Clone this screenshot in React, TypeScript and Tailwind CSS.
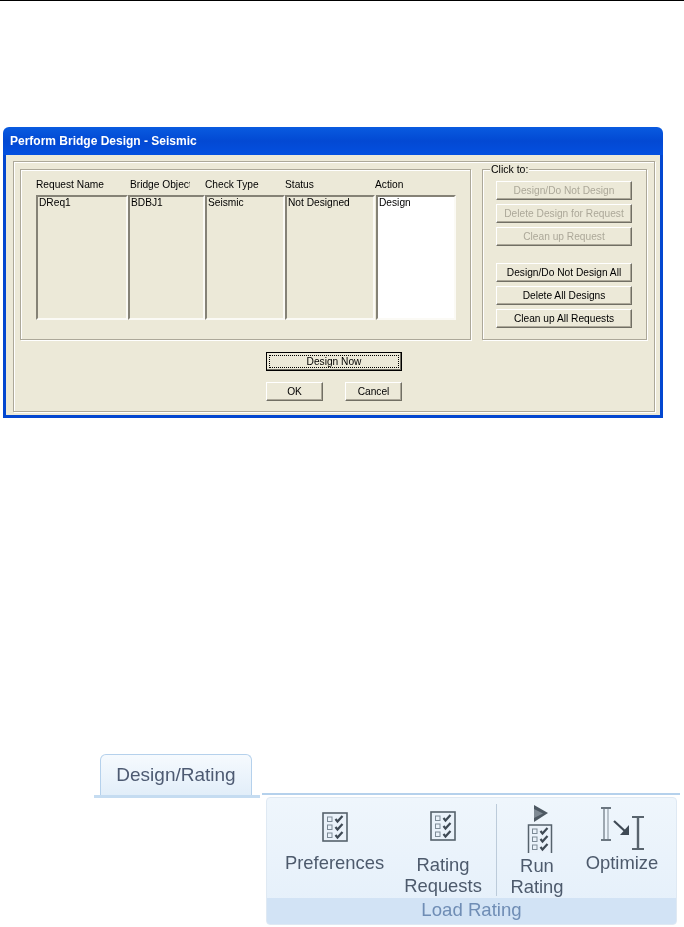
import type { ReactNode } from 'react'

// ── Dialog pieces ─────────────────────────────────────────

function ListCol({ title, value, width, titleClass, white }: { title: string; value: string; width: string; titleClass: string; white?: boolean }) {
  return (
    <div className={`flex flex-col ${width}`}>
      <div className={`h-[25px] pt-[9px] text-[10.2px] leading-[12px] whitespace-nowrap overflow-hidden ${titleClass}`}>{title}</div>
      <div
        className={`h-[125px] border-2 border-t-[#858276] border-l-[#858276] border-r-[#fbfaf5] border-b-[#fbfaf5] pl-px text-[10.2px] leading-[12px] whitespace-nowrap overflow-hidden ${white ? 'bg-white' : ''}`}
      >
        {value}
      </div>
    </div>
  )
}

function Btn({ children, disabled, className }: { children: ReactNode; disabled?: boolean; className: string }) {
  return (
    <div
      className={`h-[19px] flex items-center justify-center border border-t-white border-l-white border-r-[#716f64] border-b-[#716f64] shadow-[inset_-1px_-1px_0_#aca899] text-[10.2px] whitespace-nowrap ${disabled ? 'text-[#aca899]' : 'text-black'} ${className}`}
    >
      {children}
    </div>
  )
}

// ── Ribbon icons ──────────────────────────────────────────

function ChecklistRows() {
  return (
    <g>
      {[5, 13, 21].map((y) => (
        <g key={y}>
          <rect x="5.5" y={y} width="4.5" height="4.5" fill="none" stroke="#7c8a96" strokeWidth="1" />
          <path d={`M13.5 ${y + 2}l2 2.6 5-5.6`} fill="none" stroke="#3f4a55" strokeWidth="2.2" />
        </g>
      ))}
    </g>
  )
}

function ChecklistIcon() {
  return (
    <svg width="26" height="30" viewBox="0 0 26 30">
      <rect x="1" y="1" width="24" height="28" fill="#eaf2fa" stroke="#56626c" strokeWidth="1.6" />
      <ChecklistRows />
    </svg>
  )
}

function RunIcon() {
  return (
    <svg width="26" height="48" viewBox="0 0 26 48" className="ml-[5px]">
      <path d="M7 0l14 8-14 9z" fill="#4d5862" />
      <path d="M7 4l9 4.500-9 4.500z" fill="#7f8a94" />
      <g transform="translate(0 19)">
        <path d="M1.500 29V1h23v28" fill="#eaf2fa" stroke="#56626c" strokeWidth="1.5" />
        <ChecklistRows />
      </g>
    </svg>
  )
}

function OptimizeIcon() {
  return (
    <svg width="46" height="43" viewBox="0 0 46 43">
      <path d="M2 1h10M2 33h10" stroke="#6b7680" strokeWidth="2" />
      <path d="M5 2v30" stroke="#7b8690" strokeWidth="1.4" />
      <path d="M9 2v30" stroke="#a3adb6" strokeWidth="1.4" />
      <path d="M15 14l13 12" stroke="#3f4a55" strokeWidth="2.2" />
      <path d="M30 18v10h-9z" fill="#3f4a55" />
      <path d="M33 10h12M33 42h12" stroke="#59646e" strokeWidth="2" />
      <path d="M39 10v32" stroke="#59646e" strokeWidth="2.4" />
    </svg>
  )
}

function RibbonLabel({ children }: { children: ReactNode }) {
  return <div className="text-[18.4px] leading-[21px] text-[#4d5a6c] text-center">{children}</div>
}

// ── Page ──────────────────────────────────────────────────

export default function App() {
  return (
    <div className="relative w-[684px] h-[927px] bg-white overflow-hidden font-['Liberation_Sans',Arial,sans-serif]">
      <div className="h-px bg-black" />

      {/* Perform Bridge Design dialog */}
      <div className="mt-[126px] ml-[3px] w-[660px] h-[291px] flex flex-col text-black blur-[0.3px]">
        <div className="h-[28px] rounded-t-[6px] pl-[7px] pt-[7px] bg-gradient-to-b from-[#0a5be0] via-[#0349d3] to-[#0350e0] text-white text-[12px] leading-[14px] font-bold">
          Perform Bridge Design - Seismic
        </div>
        <div className="flex-1 bg-[#ece9d8] border-x-[3px] border-b-[3px] border-[#0347d0] pl-[7px] pt-[6px]">
          <div className="w-[642px] h-[251px] border border-[#aca899] shadow-[inset_1px_1px_0_#fff,1px_1px_0_#fff] pl-[6px] pt-[7px]">
            <div className="flex gap-[11px]">
              <div className="w-[451px] h-[171px] border border-[#aca899] shadow-[inset_1px_1px_0_#fff,1px_1px_0_#fff] pl-[15px]">
                <div className="flex">
                  <ListCol title="Request Name" value="DReq1" width="w-[92px]" titleClass="" />
                  <ListCol title="Bridge Object" value="BDBJ1" width="w-[77px]" titleClass="pl-[2px] w-[62px]" />
                  <ListCol title="Check Type" value="Seismic" width="w-[80px]" titleClass="" />
                  <ListCol title="Status" value="Not Designed" width="w-[90px]" titleClass="" />
                  <div className="ml-px">
                    <ListCol title="Action" value="Design" width="w-[80px]" titleClass="-ml-px" white />
                  </div>
                </div>
              </div>
              <div className="relative w-[165px] h-[171px] border border-[#aca899] shadow-[inset_1px_1px_0_#fff,1px_1px_0_#fff] pl-[13px] pt-[11px]">
                <span className="absolute -top-[7px] left-[7px] bg-[#ece9d8] px-px text-[10.5px] leading-[12px]">Click to:</span>
                <div className="flex flex-col gap-[4px] w-[136px]">
                  <Btn disabled className="w-full">Design/Do Not Design</Btn>
                  <Btn disabled className="w-full">Delete Design for Request</Btn>
                  <Btn disabled className="w-full">Clean up Request</Btn>
                  <Btn className="w-full mt-[13px]">Design/Do Not Design All</Btn>
                  <Btn className="w-full">Delete All Designs</Btn>
                  <Btn className="w-full">Clean up All Requests</Btn>
                </div>
              </div>
            </div>
            <div className="ml-[246px] mt-[12px] w-[136px] flex flex-col">
              <div className="h-[19px] border border-black p-[2px] shadow-[inset_-1px_-1px_0_#716f64]">
                <div className="h-full flex items-center justify-center border border-dotted border-black text-[10.2px]">Design Now</div>
              </div>
              <div className="mt-[11px] flex justify-between">
                <Btn className="w-[57px]">OK</Btn>
                <Btn className="w-[57px]">Cancel</Btn>
              </div>
            </div>
          </div>
        </div>
      </div>

      {/* Design/Rating ribbon */}
      <div className="mt-[336px] ml-[94px] flex blur-[0.5px]">
        <div className="w-[166px] h-[44px] flex flex-col">
          <div className="h-[41px] ml-[6px] mr-[8px] rounded-t-[6px] border-x border-t border-[#b5d1ec] bg-gradient-to-b from-[#f6fafe] to-[#e2eef9] pt-[9px] text-center text-[19px] leading-[22px] text-[#4d5a72]">
            Design/Rating
          </div>
          <div className="h-[3px] bg-[#c5dcf1]" />
        </div>
        <div className="ml-[2px] mt-[39px] w-[418px] h-[133px] border-t-2 border-[#b5d1ec] pl-[4px] pr-[3px] pt-[2px]">
          <div className="h-[128px] rounded-[4px] border border-[#dfe9f3] flex flex-col overflow-hidden bg-gradient-to-b from-[#eff6fc] to-[#e4effa]">
            <div className="h-[100px] flex">
              <div className="w-[135px] flex flex-col items-center pt-[14px]">
                <ChecklistIcon />
                <div className="mt-[10px]"><RibbonLabel>Preferences</RibbonLabel></div>
              </div>
              <div className="w-[82px] flex flex-col items-center pt-[13px]">
                <ChecklistIcon />
                <div className="mt-[13px]"><RibbonLabel>Rating<br />Requests</RibbonLabel></div>
              </div>
              <div className="w-[13px] flex justify-end pt-[6px]">
                <div className="w-px h-[92px] bg-[#bccbda]" />
              </div>
              <div className="w-[80px] flex flex-col items-center pt-[7px]">
                <RunIcon />
                <div className="mt-[2px]"><RibbonLabel>Run<br />Rating</RibbonLabel></div>
              </div>
              <div className="w-[90px] flex flex-col items-center pt-[9px]">
                <OptimizeIcon />
                <div className="mt-[2px]"><RibbonLabel>Optimize</RibbonLabel></div>
              </div>
            </div>
            <div className="flex-1 bg-[#d2e3f5] text-center text-[18.6px] leading-[24px] text-[#6f8db5]">Load Rating</div>
          </div>
        </div>
      </div>
    </div>
  )
}
